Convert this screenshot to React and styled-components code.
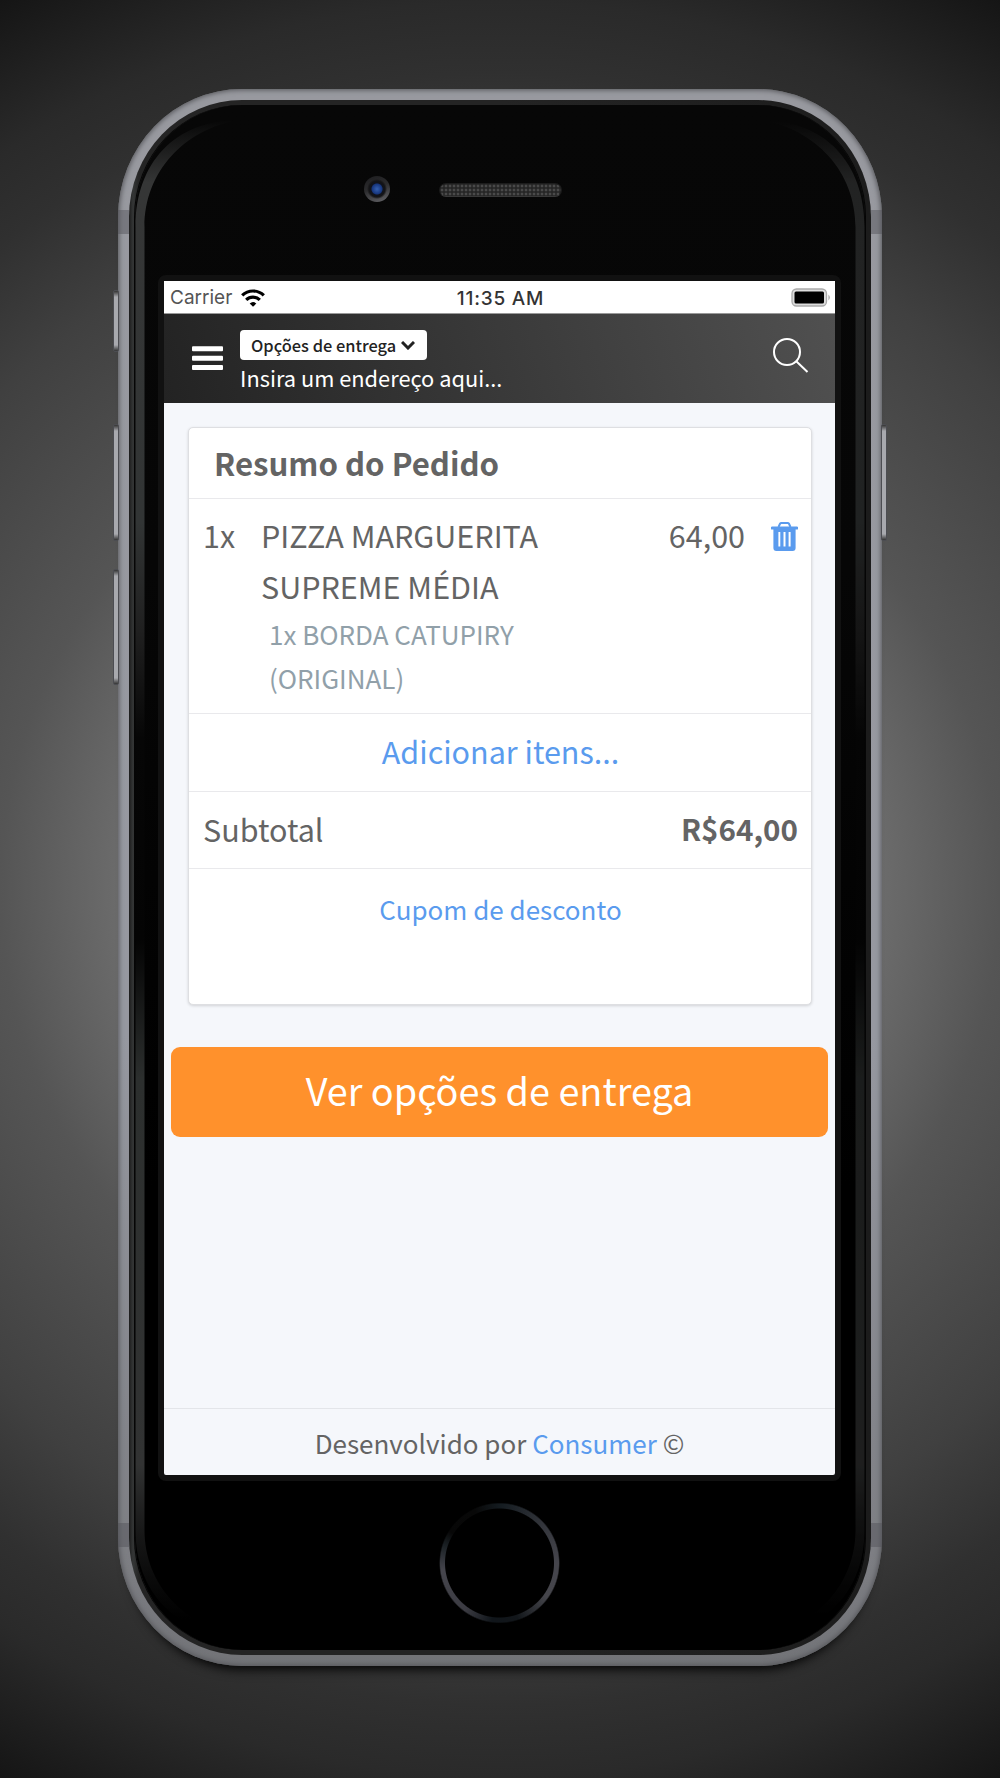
import React from "react";
import styled, { createGlobalStyle } from "styled-components";

const GlobalStyle = createGlobalStyle`
  body {
    margin: 0;
    font-family: "Noto Sans CJK SC", sans-serif;
    color: #646464;
  }

  * {
    box-sizing: border-box;
  }
`;

const Backdrop = styled.div`
  display: flex;
  justify-content: center;
  width: 1000px;
  height: 1778px;
  padding-top: 89px;
  background: radial-gradient(
    circle 1020px at 50% 50%,
    #7c7c7c 0%,
    #6c6c6c 37%,
    #555 49%,
    #404040 69%,
    #303030 80%,
    #2a2a2a 87%,
    #151515 100%
  );
`;

const Phone = styled.div`
  position: relative;
  width: 764px;
  height: 1577px;
  padding: 11px;
  border-radius: 124px / 128px;
  background: linear-gradient(180deg, #98999f, #9698a0 60%, #7c7d82 94%, #727377);
  box-shadow: inset 0 0 5px 1px #55565a, 0 14px 12px -11px #000;
`;

const SideButton = styled.div`
  position: absolute;
  ${({ side }) => side}: -5px;
  top: ${({ top }) => top}px;
  width: 6px;
  height: ${({ height }) => height}px;
  border-radius: 2px;
  border: 1px solid #4c4d52;
  background: linear-gradient(180deg, #333 0, #a8a9ae 6px, #a8a9ae calc(100% - 6px), #333 100%);
`;

const Antenna = styled.div`
  position: absolute;
  ${({ side }) => side}: 0;
  top: ${({ top }) => top}px;
  width: 11px;
  height: 24px;
  background: rgba(80, 80, 86, 0.45);
`;

const Rim = styled.div`
  height: 100%;
  padding: 5px 6px;
  border-radius: 113px / 117px;
  background: linear-gradient(90deg, #1c1c1c, #343636 4px, #242424 10px, #242424 50%, #1c1c1c);
`;

const Glass = styled.div`
  position: relative;
  display: flex;
  flex-direction: column;
  align-items: center;
  height: 100%;
  border-radius: 107px / 112px;
  background: linear-gradient(180deg, #070707, #060606 30%, #000 70%);
  box-shadow: -1px 0 0 #050505, 1px 0 0 #050505;
`;

const SheenSvg = styled.svg`
  position: absolute;
  top: 0;
  ${({ side }) => side}: 0;
  transform: ${({ side }) => (side === "right" ? "scaleX(-1)" : "none")};
  opacity: ${({ side }) => (side === "right" ? 0.6 : 1)};
`;

const TopBezel = styled.div`
  position: relative;
  flex: none;
  width: 100%;
  height: 170px;
`;

const Camera = styled.div`
  position: absolute;
  left: 229px;
  top: 71px;
  width: 26px;
  height: 26px;
  border-radius: 50%;
  background: radial-gradient(circle, #3560b0 0, #16357c 5px, #10131c 6px, #141416 8px, transparent 10px),
    linear-gradient(160deg, #1c1c1e, #2c2c2e 45%, #66666a);
`;

const Speaker = styled.div`
  position: absolute;
  left: 304px;
  top: 78px;
  width: 123px;
  height: 14px;
  border-radius: 7px;
  border: 1px solid #1c1c1c;
  border-bottom-color: #383838;
  background: radial-gradient(#4a4a4a 25%, #262626 65%) 0 0 / 4px 4px;
`;

const Screen = styled.div`
  display: flex;
  flex: none;
  flex-direction: column;
  width: 683px;
  height: 1206px;
  margin-right: 1px;
  border: 6px solid #111;
  border-radius: 8px;
  background: #f5f7fb;
`;

const HomeButton = styled.div`
  flex: none;
  width: 121px;
  height: 122px;
  margin: 21px 2px 0 0;
  border-radius: 50%;
  background: radial-gradient(circle, #000 54px, transparent 55px, transparent 59px, #000 60.5px),
    conic-gradient(#141b20, #34363c 14%, #45454c 25%, #45454b 35%, #12161a 45%, #10151a 52%, #3b3b42 60%, #45454c 73%, #1a2024 80%, #070707 84%, #080808 93%, #141b20);
`;

const StatusBar = styled.div`
  display: grid;
  grid-template-columns: 1fr auto 1fr;
  align-items: center;
  height: 33px;
  padding: 0 4px 0 6px;
  border-bottom: 1px solid #999;
  background: #fff;
  font-family: Inter, sans-serif;
  font-size: 19px;
  color: #555;
`;

const Carrier = styled.div`
  display: flex;
  align-items: center;
  gap: 9px;
  padding-top: 1px;
`;

const Clock = styled.div`
  padding-top: 2px;
  color: #333;
  font-weight: 500;
  letter-spacing: 0.8px;
`;

const Battery = styled.svg`
  justify-self: end;
`;

const Header = styled.header`
  display: flex;
  height: 89px;
  padding: 16px 26px 0 28px;
  background: linear-gradient(75deg, #232323, #505050);
`;

const Burger = styled.svg`
  margin-top: 16px;
`;

const Delivery = styled.div`
  flex: 1;
  margin-left: 17px;
`;

const DeliveryButton = styled.button`
  display: flex;
  align-items: center;
  gap: 5px;
  width: 187px;
  height: 30px;
  padding: 0 0 0 11px;
  border: 0;
  border-radius: 4px;
  background: #fff;
  color: #222;
  font-family: inherit;
  font-size: 16.4px;
  font-weight: 500;
`;

const Address = styled.div`
  color: #fff;
  font-size: 21.8px;
  line-height: 35px;
`;

const SearchIcon = styled.svg`
  margin-top: 8px;
`;

const Card = styled.section`
  width: 624px;
  height: 578px;
  margin: 24px 0 0 24px;
  border: 1px solid #dedfe2;
  border-radius: 5px;
  background: #fff;
  box-shadow: 0 1px 3px rgba(0, 0, 0, 0.15);
  font-size: 30.5px;
`;

const CardTitle = styled.h2`
  height: 71px;
  margin: 0;
  padding-left: 25px;
  border-bottom: 1px solid #e9e9ec;
  font-size: 31.2px;
  font-weight: 600;
  line-height: 69px;
`;

const Item = styled.div`
  display: flex;
  height: 215px;
  padding: 11px 13px 0 14px;
  border-bottom: 1px solid #e9e9ec;
  line-height: 50.5px;
`;

const Quantity = styled.div`
  width: 58px;
`;

const Product = styled.div`
  flex: 1;
`;

const Extra = styled.div`
  width: 280px;
  padding: 1px 0 0 8px;
  color: #91a0a9;
  font-size: 26px;
  line-height: 44px;
`;

const TrashIcon = styled.svg`
  margin: 12px 0 0 26px;
`;

const Row = styled.div`
  display: flex;
  justify-content: ${({ spread }) => (spread ? "space-between" : "center")};
  height: ${({ tall }) => (tall ? 81 : 77.5)}px;
  padding: 0 13px 0 14px;
  border-bottom: ${({ last }) => (last ? "0" : "1px solid #e9e9ec")};
  line-height: ${({ tall }) => (tall ? 79 : 74)}px;
`;

const Link = styled.a`
  color: #5a9bee;
  font-size: ${({ size }) => size || "inherit"};
`;

const Total = styled.b`
  font-size: 29.6px;
  font-weight: 600;
`;

const OrderButton = styled.button`
  width: 657px;
  height: 90px;
  margin: 42px 0 0 7px;
  padding: 0 0 5px;
  border: 0;
  border-radius: 9px;
  background: #ff912c;
  color: #fff;
  font-family: inherit;
  font-size: 37.8px;
`;

const Footer = styled.footer`
  height: 67px;
  margin-top: auto;
  border-top: 1px solid #e3e5e9;
  font-size: 26px;
  line-height: 68px;
  text-align: center;
`;

// reflection that runs down one edge of the glass and fades in the corners
const Sheen = ({ side }) => (
  <SheenSvg side={side} width="110" height="1545" viewBox="0 0 110 1545">
    <defs>
      <linearGradient id={`sheen-${side}`} gradientUnits="userSpaceOnUse" x1="0" y1="0" x2="0" y2="1545">
        <stop offset="0.01" stopColor="#353636" stopOpacity="0" />
        <stop offset="0.05" stopColor="#353636" />
        <stop offset="0.27" stopColor="#323535" />
        <stop offset="0.34" stopColor="#202020" />
        <stop offset="0.41" stopColor="#060606" />
        <stop offset="0.54" stopColor="#040404" />
        <stop offset="0.63" stopColor="#2c2f2e" />
        <stop offset="0.88" stopColor="#323333" />
        <stop offset="0.98" stopColor="#222" stopOpacity="0" />
      </linearGradient>
    </defs>
    <path
      fill={`url(#sheen-${side})`}
      d="M0.5 122C0.5 58 40 15 104 15C50 24 9.5 66 9.5 122V1425C9.5 1480 50 1522 104 1530C40 1530 0.5 1486 0.5 1425z"
    />
  </SheenSvg>
);

const App = () => {
  return (
    <Backdrop>
      <GlobalStyle />
      <Phone>
        <SideButton side="left" top={201} height={62} />
        <SideButton side="left" top={335} height={117} />
        <SideButton side="left" top={480} height={116} />
        <SideButton side="right" top={335} height={117} />
        <Antenna side="left" top={121} />
        <Antenna side="right" top={121} />
        <Antenna side="left" top={1434} />
        <Antenna side="right" top={1434} />
        <Rim>
          <Glass>
            <Sheen side="left" />
            <Sheen side="right" />
            <TopBezel>
              <Camera />
              <Speaker />
            </TopBezel>
            <Screen>
              <StatusBar>
                <Carrier>
                  Carrier
                  <svg width="24" height="18" viewBox="0 0 24 18" fill="none" stroke="#000" strokeWidth="3.2">
                    <path d="M1.2 6.4a15.4 15.4 0 0 1 21.6 0M5.2 10.9a9.8 9.8 0 0 1 13.6 0" />
                    <path d="M12 17.8l-3.3-3.2a4.8 4.8 0 0 1 6.6 0z" fill="#000" stroke="none" />
                  </svg>
                </Carrier>
                <Clock>11:35 AM</Clock>
                <Battery width="40" height="19" viewBox="0 0 40 19">
                  <rect x="1" y="1" width="34.5" height="17" rx="4.5" fill="#ddd" stroke="#aaa" strokeWidth="1.3" />
                  <rect x="3.5" y="3.5" width="29.5" height="12" rx="1.5" fill="#000" />
                  <path d="M37.5 6.5q2.5 3 0 6z" fill="#999" />
                </Battery>
              </StatusBar>
              <Header>
                <Burger width="31" height="25" viewBox="0 0 31 25" fill="#fff">
                  <rect y="0.3" width="31" height="5" rx="1" />
                  <rect y="9.7" width="31" height="5" rx="1" />
                  <rect y="19.1" width="31" height="5" rx="1" />
                </Burger>
                <Delivery>
                  <DeliveryButton>
                    Opções de entrega
                    <svg width="14" height="9" viewBox="0 0 14 9" fill="none" stroke="#222" strokeWidth="3">
                      <path d="M1 1l6 6 6-6" />
                    </svg>
                  </DeliveryButton>
                  <Address>Insira um endereço aqui...</Address>
                </Delivery>
                <SearchIcon width="36" height="36" viewBox="0 0 36 36" fill="none" stroke="#fff" strokeWidth="2">
                  <circle cx="14" cy="14" r="13" />
                  <path d="M23 23l11.5 11" />
                </SearchIcon>
              </Header>
              <Card>
                <CardTitle>Resumo do Pedido</CardTitle>
                <Item>
                  <Quantity>1x</Quantity>
                  <Product>
                    PIZZA MARGUERITA
                    <br />
                    SUPREME MÉDIA
                    <Extra>1x BORDA CATUPIRY (ORIGINAL)</Extra>
                  </Product>
                  <div>64,00</div>
                  <TrashIcon width="27" height="30" viewBox="0 0 27 30">
                    <path d="M7.5 5L9 1.8Q9.4 1 10.4 1h6.2q1 0 1.4.8L19.5 5" fill="none" stroke="#5a9bee" strokeWidth="2" />
                    <path
                      fill="#5a9bee"
                      fillRule="evenodd"
                      d="M1 4.6h25a1 1 0 0 1 0 2.9H24.6V26q0 3-3 3H5.4q-3 0-3-3V7.5H1a1 1 0 0 1 0-2.9zM7.4 10v14.5h1.9V10zm5.1 0v14.5h2V10zm5.1 0v14.5h2V10z"
                    />
                  </TrashIcon>
                </Item>
                <Row>
                  <Link>Adicionar itens...</Link>
                </Row>
                <Row spread>
                  <span>Subtotal</span>
                  <Total>R$64,00</Total>
                </Row>
                <Row tall last>
                  <Link size="26px">Cupom de desconto</Link>
                </Row>
              </Card>
              <OrderButton>Ver opções de entrega</OrderButton>
              <Footer>
                Desenvolvido por <Link>Consumer</Link> ©
              </Footer>
            </Screen>
            <HomeButton />
          </Glass>
        </Rim>
      </Phone>
    </Backdrop>
  );
};

export default App;
